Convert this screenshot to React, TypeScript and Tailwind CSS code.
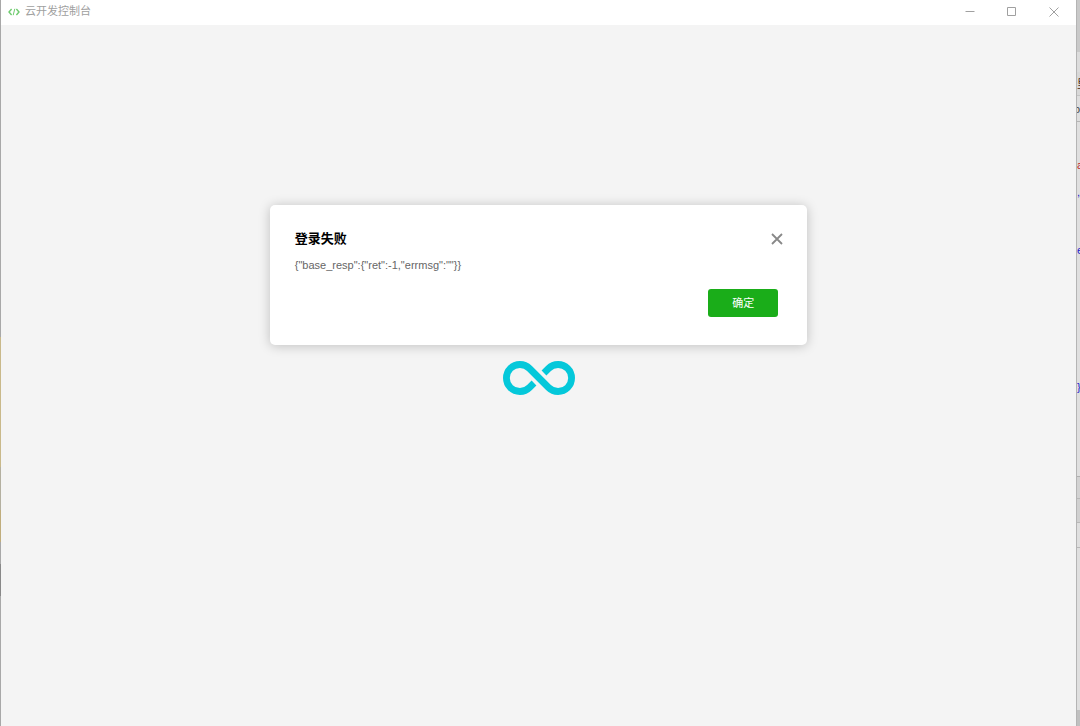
import * as React from "react"

// Slivers of the editor that sits behind the console window
const EDITOR_ROWS = [
  { id: "tab", text: "", className: "h-[52px] bg-[#c9c9c9]" },
  { id: "toolbar", text: "", className: "h-[20px] bg-[#dcdcdc]" },
  { id: "title", text: "里", className: "h-[24px] border-b border-[#c4c4c4] bg-[#d8d8d8] text-[#4a2a10]" },
  { id: "path", text: "o", className: "h-[26px] justify-end border-b border-[#b5b5b5] bg-[#dedede] text-[#444444]" },
  { id: "line-1", text: "", className: "h-[34px]" },
  { id: "line-2", text: "a", className: "h-[18px] text-[#c22a2a]" },
  { id: "line-3", text: ",", className: "h-[36px] text-[#2222cc]" },
  { id: "line-4", text: "", className: "h-[31px]" },
  { id: "line-5", text: "e", className: "h-[18px] text-[#2222cc]" },
  { id: "line-6", text: "", className: "h-[118px]" },
  { id: "line-7", text: "}", className: "h-[20px] text-[#2222cc]" },
  { id: "line-8", text: "", className: "h-[79px]" },
  { id: "panel-1", text: "", className: "h-[22px] border-t border-[#b0b0b0] bg-[#d2d2d2]" },
  { id: "panel-2", text: "", className: "h-[25px] border-y border-[#b8b8b8] bg-[#d0d0d0]" },
  { id: "panel-3", text: "", className: "h-[25px] border-b border-[#b8b8b8]" },
  { id: "output", text: "", className: "h-[162px]" },
  { id: "status", text: "", className: "flex-1 bg-[#c0c0c0]" },
]

function CodeIcon() {
  return (
    <svg className="h-[8px] w-[12px]" viewBox="0 0 12 8" fill="none" stroke="#6fcb6f" strokeWidth="1.4" aria-hidden="true">
      <path d="M3.6 1 1 4l2.6 3M8.4 1 11 4 8.4 7" />
      <path d="M6.8.8 5.2 7.2" strokeWidth="1" />
    </svg>
  )
}

function LoadingLogo() {
  return (
    <svg className="h-[34px] w-[72px]" viewBox="0 0 72 34" fill="none" stroke="#04c8da" strokeWidth="6.8" role="img" aria-label="loading">
      <path d="M31 22 26.5 26.5A13.5 13.5 0 1 1 26.5 7.5L45.5 26.5A13.5 13.5 0 1 0 45.5 7.5L41 12" />
    </svg>
  )
}

function TitleBar() {
  return (
    <header className="flex h-[25px] shrink-0 items-start justify-between bg-white pr-px pl-[7px] text-[#a0a0a0]">
      <div className="flex h-[23px] items-center gap-[5px]">
        <CodeIcon />
        <h1 className="text-[11px] leading-[15px]">云开发控制台</h1>
      </div>
      <div className="flex h-[23px] items-center">
        <button type="button" aria-label="最小化" className="flex h-[23px] w-[42px] items-center justify-center">
          <svg className="h-[9px] w-[10px]" viewBox="0 0 10 9" stroke="currentColor" aria-hidden="true">
            <path d="M.5 4.5h9" />
          </svg>
        </button>
        <button type="button" aria-label="最大化" className="flex h-[23px] w-[42px] items-center justify-center">
          <svg className="size-[10px]" viewBox="0 0 10 10" fill="none" stroke="currentColor" aria-hidden="true">
            <path d="M.5.5h8v8h-8z" />
          </svg>
        </button>
        <button type="button" aria-label="关闭窗口" className="flex h-[23px] w-[42px] items-center justify-center">
          <svg className="size-[10px]" viewBox="0 0 10 10" stroke="currentColor" aria-hidden="true">
            <path d="m.5.5 9 9M9.500.5.5 9.500" />
          </svg>
        </button>
      </div>
    </header>
  )
}

function LoginErrorDialog({ onClose }: { onClose: () => void }) {
  return (
    <div className="absolute inset-x-0 top-0 flex justify-center pt-[180px]">
      <section
        role="dialog"
        aria-labelledby="dialog-title"
        aria-describedby="dialog-message"
        className="w-1/2 rounded-[5px] bg-white pt-6 pr-[29px] pb-7 pl-[25px] shadow-[0_1px_12px_rgba(0,0,0,0.22)]"
      >
        <div className="flex items-center justify-between">
          <h2 id="dialog-title" className="text-[13px] leading-5 font-bold text-black">登录失败</h2>
          <button type="button" aria-label="关闭" onClick={onClose} className="-mr-[9px] flex size-5 items-center justify-center">
            <svg className="size-3" viewBox="0 0 12 12" stroke="#888888" strokeWidth="1.8" aria-hidden="true">
              <path d="m1 1 10 10M11 1 1 11" />
            </svg>
          </button>
        </div>
        <p id="dialog-message" className="mt-2 text-[11px] leading-4 text-[#666666]">
          {'{"base_resp":{"ret":-1,"errmsg":""}}'}
        </p>
        <div className="mt-4 flex justify-end">
          <button
            type="button"
            onClick={onClose}
            className="flex h-7 w-[70px] items-center justify-center rounded-[3px] bg-[#1aad19] text-[11px] leading-4 text-white"
          >
            确定
          </button>
        </div>
      </section>
    </div>
  )
}

export default function App() {
  const [open, setOpen] = React.useState(true)

  return (
    <div className="flex h-screen overflow-hidden bg-[#a8a8a8] font-['Liberation_Sans','Noto_Sans_CJK_SC',sans-serif]">
      {/* Left edge of the background window */}
      <div className="flex w-px flex-col" aria-hidden="true">
        <div className="h-[337px]" />
        <div className="h-[130px] bg-[#c9b98a]" />
        <div className="h-[43px] bg-[#b4b0a0]" />
        <div className="h-[32px] bg-[#c0ad7c]" />
        <div className="h-[22px]" />
        <div className="h-[32px] bg-[#888888]" />
      </div>

      <div className="flex min-w-0 flex-1 flex-col">
        <TitleBar />
        <main className="relative flex flex-1 items-center justify-center bg-[#f4f4f4] pt-1">
          <LoadingLogo />
          {open && <LoginErrorDialog onClose={() => setOpen(false)} />}
        </main>
      </div>

      <div className="flex w-1 flex-col overflow-hidden border-l border-[#b4b4b4] bg-[#dfdfdf]" aria-hidden="true">
        {EDITOR_ROWS.map((row) => (
          <div key={row.id} className={`flex shrink-0 items-center overflow-hidden text-[11px] leading-4 ${row.className}`}>
            {row.text}
          </div>
        ))}
      </div>
    </div>
  )
}
